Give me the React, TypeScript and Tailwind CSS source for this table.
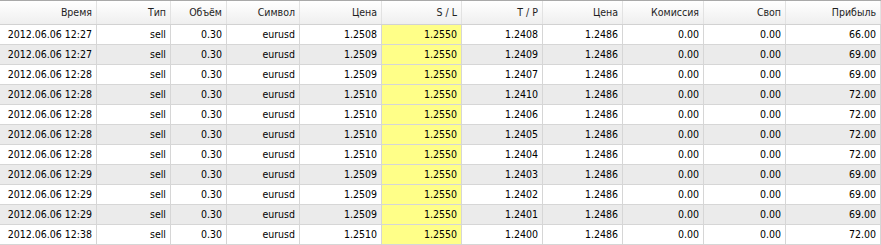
type Trade = {
  time: string;
  open: string;
  tp: string;
  profit: string;
};

const trades: Trade[] = [
  { time: "2012.06.06 12:27", open: "1.2508", tp: "1.2408", profit: "66.00" },
  { time: "2012.06.06 12:27", open: "1.2509", tp: "1.2409", profit: "69.00" },
  { time: "2012.06.06 12:28", open: "1.2509", tp: "1.2407", profit: "69.00" },
  { time: "2012.06.06 12:28", open: "1.2510", tp: "1.2410", profit: "72.00" },
  { time: "2012.06.06 12:28", open: "1.2510", tp: "1.2406", profit: "72.00" },
  { time: "2012.06.06 12:28", open: "1.2510", tp: "1.2405", profit: "72.00" },
  { time: "2012.06.06 12:28", open: "1.2510", tp: "1.2404", profit: "72.00" },
  { time: "2012.06.06 12:29", open: "1.2509", tp: "1.2403", profit: "69.00" },
  { time: "2012.06.06 12:29", open: "1.2509", tp: "1.2402", profit: "69.00" },
  { time: "2012.06.06 12:29", open: "1.2509", tp: "1.2401", profit: "69.00" },
  { time: "2012.06.06 12:38", open: "1.2510", tp: "1.2400", profit: "72.00" },
];

const headers = ["Время", "Тип", "Объём", "Символ", "Цена", "S / L", "T / P", "Цена", "Комиссия", "Своп", "Прибыль"];

const cols = "grid grid-cols-[97px_74px_56px_73px_82px_80px_81px_80px_81px_82px_1fr]";

export default function App() {
  return (
    <div className="h-[245px] w-[881px] overflow-hidden bg-white text-[10.5px] text-black [font-family:'DejaVu_Sans_Condensed','DejaVu_Sans',sans-serif]">
      <div className={`${cols} h-[25px] border-t border-b border-t-[#a9a9a9] border-b-[#d2d2d2] bg-gradient-to-b from-white to-[#efefef]`}>
        {headers.map((label, index) => (
          <div className="flex items-center justify-end border-r border-[#e2e2e2] pr-[4px] text-[#1e1e1e]" key={index}>
            {label}
          </div>
        ))}
      </div>
      {trades.map((trade, index) => {
        const rowBg = index % 2 === 1 ? "bg-[#ebebeb]" : "bg-white";
        const cells = [trade.time, "sell", "0.30", "eurusd", trade.open, "1.2550", trade.tp, "1.2486", "0.00", "0.00", trade.profit];
        return (
          <div className={`${cols} h-[20px] ${rowBg}`} key={index}>
            {cells.map((value, cellIndex) => (
              <div
                className={`flex items-center justify-end border-r border-b border-[#d6d6d6] pr-[4px] ${cellIndex === 5 ? "bg-[#ffff88]" : ""}`}
                key={cellIndex}
              >
                {value}
              </div>
            ))}
          </div>
        );
      })}
    </div>
  );
}
